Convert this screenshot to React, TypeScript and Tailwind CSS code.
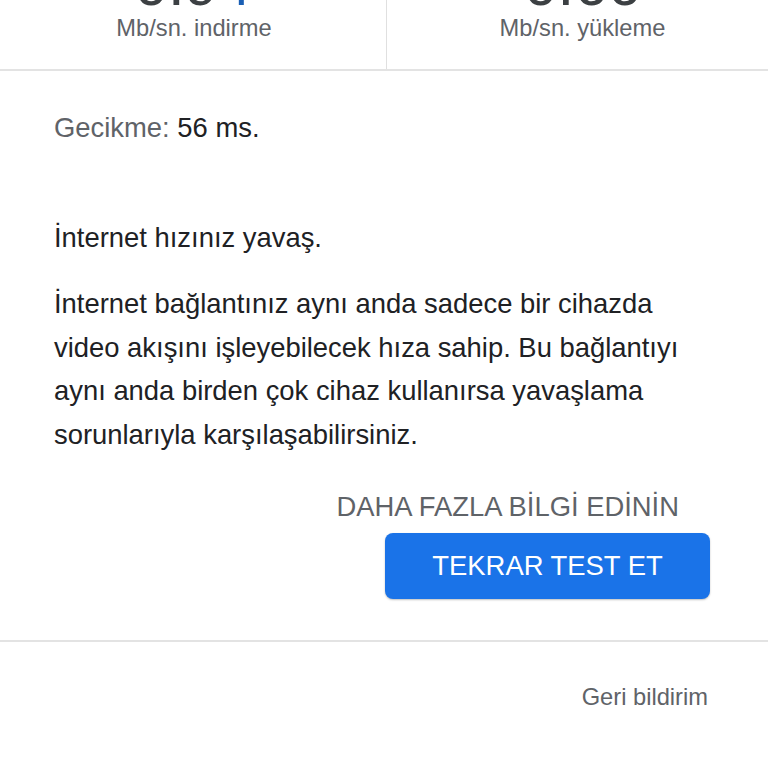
import React from "react";

export default function App() {
  const font = { fontFamily: '"Liberation Sans", Arial, sans-serif' };
  return (
    <div className="w-[768px] h-[768px] overflow-hidden bg-white" style={font}>
      <div className="flex border-b-2 border-[#e3e3e3] h-[71px]">
        <div className="w-[387px] flex flex-col items-center border-r-[1.5px] border-[#e0e0e0]">
          <div className="-mt-[40px] h-[54px] text-[60px] leading-[50px] text-[#3c4043]">
            0.9<span className="text-[#1a5fb4]">4</span>
          </div>
          <div className="text-[23.7px] leading-[29px] text-[#5f6368] pl-[2px]">Mb/sn. indirme</div>
        </div>
        <div className="flex-1 flex flex-col items-center pl-[10px]">
          <div className="-mt-[40px] h-[54px] text-[60px] leading-[50px] text-[#3c4043]">0.66</div>
          <div className="text-[23.7px] leading-[29px] text-[#5f6368]">Mb/sn. yükleme</div>
        </div>
      </div>

      <div className="px-[54px] pt-[35px]">
        <div className="text-[27.4px] leading-[44px]">
          <span className="text-[#5f6368]">Gecikme:</span>{" "}
          <span className="text-[#202124]">56 ms.</span>
        </div>
        <div className="mt-[66px] text-[27.4px] leading-[44px] text-[#202124]">İnternet hızınız yavaş.</div>
        <p className="mt-[22px] text-[27.4px] leading-[43.7px] text-[#202124] w-[640px]">
          İnternet bağlantınız aynı anda sadece bir cihazda video akışını işleyebilecek hıza sahip. Bu bağlantıyı aynı anda birden çok cihaz kullanırsa yavaşlama sorunlarıyla karşılaşabilirsiniz.
        </p>
        <div className="mt-[33px] flex justify-end pr-[35px]">
          <span className="text-[27.4px] leading-[34px] text-[#5f6368]">DAHA FAZLA BİLGİ EDİNİN</span>
        </div>
        <div className="mt-[9px] flex justify-end pr-[4px]">
          <button className="w-[325px] h-[66px] rounded-[8px] bg-[#1a73e8] text-white text-[27.4px] shadow-[0_1px_2px_rgba(0,0,0,0.25)]">
            TEKRAR TEST ET
          </button>
        </div>
      </div>

      <div className="mt-[41px] border-t-2 border-[#e3e3e3]" />
      <div className="flex justify-end pr-[60px] pt-[40px]">
        <span className="text-[23.7px] leading-[30px] text-[#5f6368]">Geri bildirim</span>
      </div>
    </div>
  );
}
